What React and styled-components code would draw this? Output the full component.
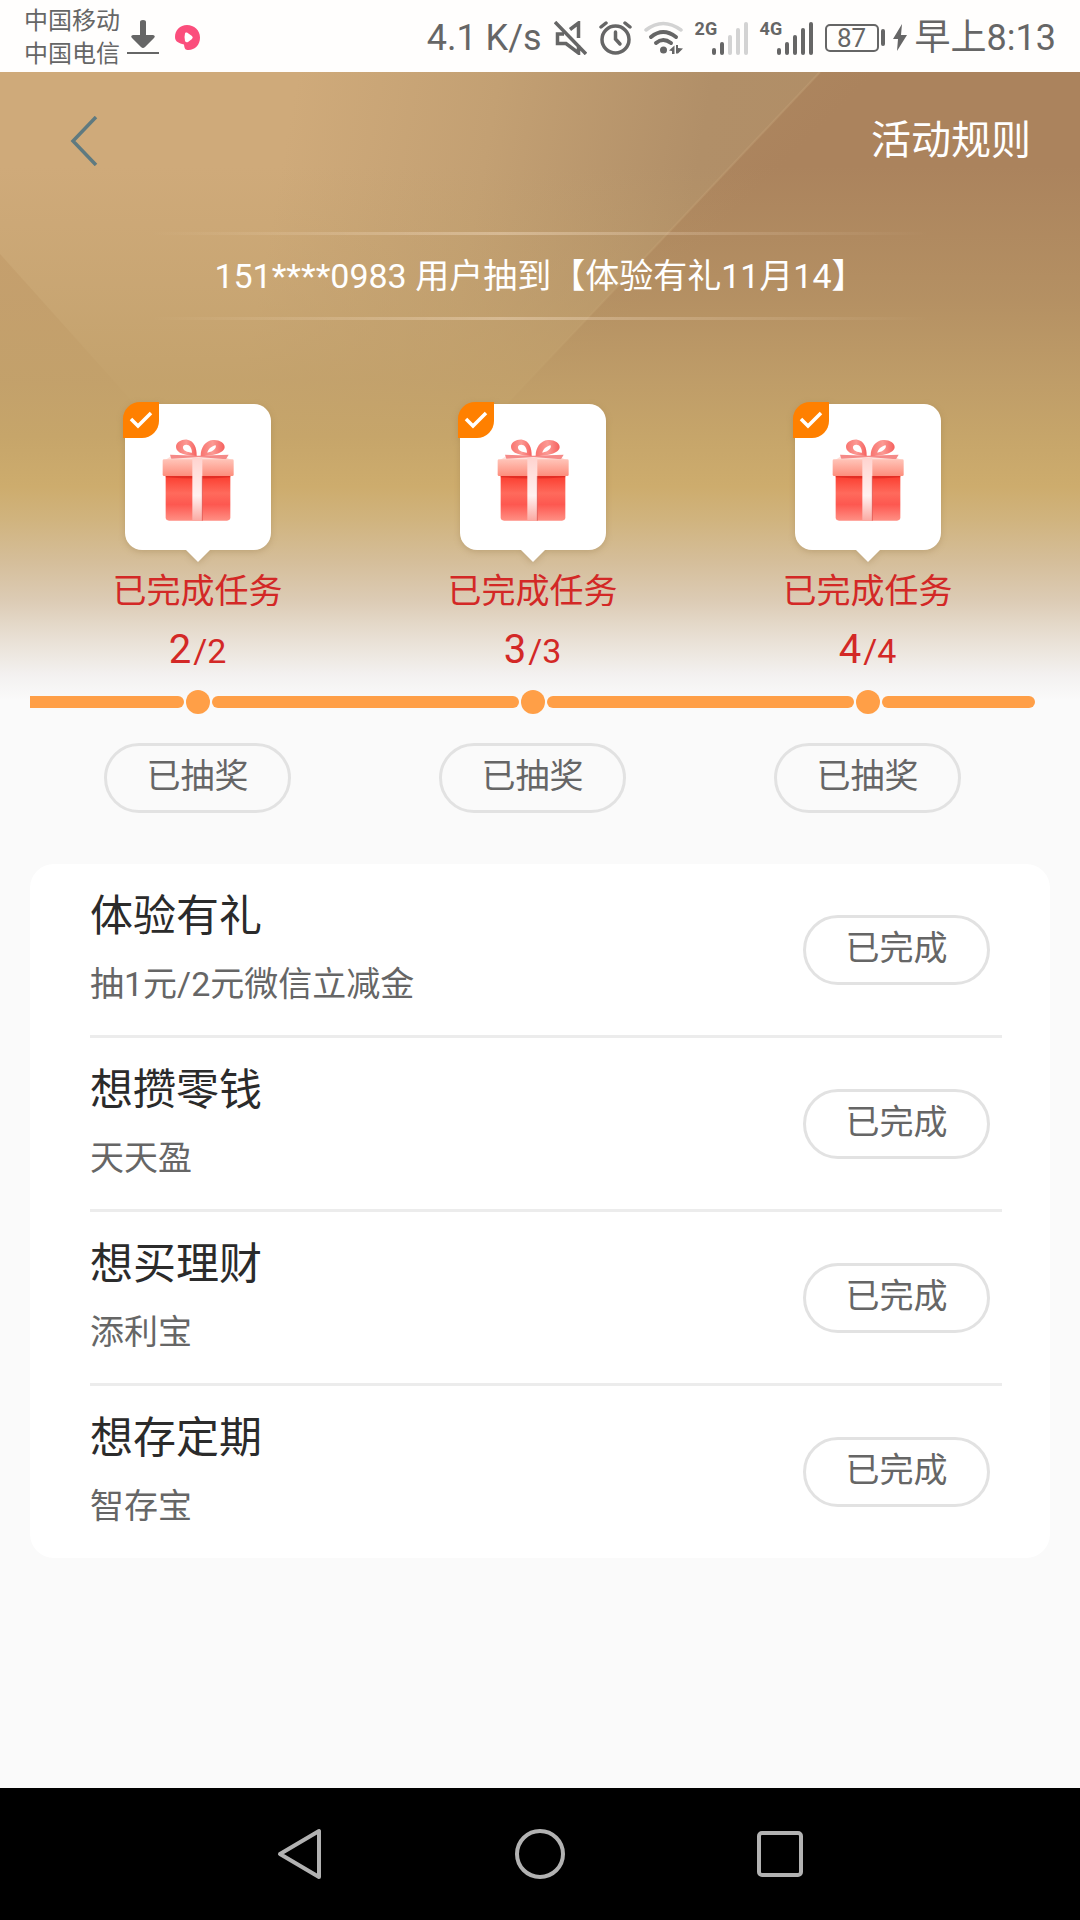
import React from "react";
import styled, { createGlobalStyle } from "styled-components";

const GlobalStyle = createGlobalStyle`
  * {
    box-sizing: border-box;
  }

  body {
    margin: 0;
    background: #fafafa;
    font-family: Roboto, "Noto Sans CJK SC", sans-serif;
  }

  h2, p, ul {
    margin: 0;
    padding: 0;
    font-weight: 400;
  }

  button {
    font-family: inherit;
    cursor: pointer;
  }

  svg {
    display: block;
    flex: none;
  }
`;

const Page = styled.div`
  display: flex;
  flex-direction: column;
  min-height: 100vh;
`;

const StatusBar = styled.div`
  display: flex;
  align-items: center;
  height: 72px;
  padding: 3px 24px 0;
  background: #fffefd;
  color: #666;
`;

const Carriers = styled.div`
  font-size: 24px;
  line-height: 33px;
  margin-right: 7px;
`;

const StatusIcons = styled.div`
  display: flex;
  align-items: center;
  gap: 12px;
  margin-left: auto;
`;

const StatusText = styled.span`
  font-size: 36px;
  line-height: 40px;
  white-space: nowrap;
`;

const PowerGroup = styled.div`
  display: flex;
  align-items: center;
  gap: 8px;
`;

const SignalGroup = styled.div`
  display: flex;
  align-items: flex-start;
`;

const NetworkType = styled.span`
  font-size: 18px;
  font-weight: 700;
  line-height: 16px;
  width: 17px;
`;

const Battery = styled.span`
  display: flex;
  align-items: center;
  gap: 2px;
  font-size: 26px;
  line-height: 24px;

  span {
    width: 54px;
    border: 2px solid #666;
    border-radius: 5px;
    text-align: center;
  }

  &::after {
    content: "";
    width: 4px;
    height: 17px;
    border-radius: 2px;
    background: #666;
  }
`;

const Main = styled.main`
  position: relative;
  flex: 1;
  display: flex;
  flex-direction: column;
  padding-bottom: 48px;
`;

const Backdrop = styled.div`
  position: absolute;
  top: 0;
  left: 0;
  right: 0;
  height: 628px;
  z-index: -1;
  overflow: hidden;
  background: linear-gradient(
    100deg,
    #cfaa7a 0%,
    #cfaa7a 25%,
    #c3a073 42%,
    #b18f68 60%,
    #b08b63 100%
  );

  &::after {
    content: "";
    position: absolute;
    inset: 0;
    background: linear-gradient(
      180deg,
      rgba(192, 160, 106, 0) 15%,
      rgba(192, 160, 106, 0.45) 36%,
      rgba(194, 161, 106, 0.85) 49%,
      #c6a56a 58%,
      #cdac6d 66%,
      #d0b37d 71%,
      #d5be9a 78%,
      #dccbb4 84%,
      #e8dfd3 90%,
      #f3f1f0 96%,
      #fafafa 100%
    );
  }
`;

const Facets = styled.svg`
  position: absolute;
  top: 0;
  left: 0;
  width: 100%;
  height: 100%;
`;

const TopBar = styled.div`
  display: flex;
  align-items: center;
  justify-content: space-between;
  height: 132px;
  padding: 5px 49px 0 60px;
`;

const BackButton = styled.button`
  padding: 10px;
  border: none;
  background: transparent;
`;

const RulesLink = styled.a`
  color: #fff;
  font-size: 40px;
  line-height: 48px;
  text-decoration: none;
`;

const Notice = styled.p`
  margin: 28px 150px 0;
  padding: 19px 0;
  border-style: solid;
  border-width: 3px 0;
  border-image: linear-gradient(
      90deg,
      rgba(255, 235, 215, 0),
      rgba(255, 235, 215, 0.35) 45%,
      rgba(255, 235, 215, 0)
    )
    1;
  color: #fff;
  font-size: 34px;
  line-height: 44px;
  text-align: center;
  white-space: nowrap;
`;

const Milestones = styled.div`
  display: grid;
  grid-template-columns: repeat(3, 1fr);
  margin: 84px 45px 0 30px;
`;

const Milestone = styled.div`
  display: flex;
  flex-direction: column;
  align-items: center;
  color: #d32826;
`;

const GiftCard = styled.div`
  position: relative;
  display: flex;
  justify-content: center;
  width: 146px;
  height: 146px;
  padding-top: 35px;
  border-radius: 17px;
  background: #fff;
  filter: drop-shadow(0 2px 3px rgba(140, 110, 60, 0.3));

  &::after {
    content: "";
    position: absolute;
    top: 100%;
    left: 50%;
    margin-left: -12px;
    border: 12px solid transparent;
    border-top-color: #fff;
    border-bottom: none;
  }
`;

const DoneBadge = styled.span`
  position: absolute;
  top: -2px;
  left: -2px;
  display: flex;
  align-items: center;
  justify-content: center;
  width: 36px;
  height: 36px;
  border-radius: 17px 0 17px 0;
  background: #ff8000;
`;

const MilestoneLabel = styled.p`
  margin-top: 17px;
  font-size: 34px;
  line-height: 48px;
`;

const Count = styled.p`
  margin-top: 11px;
  font-size: 34px;
  line-height: 48px;

  strong {
    font-size: 40px;
    font-weight: 400;
    margin-right: 2px;
  }
`;

const Track = styled.div`
  display: flex;
  align-items: center;
  gap: 2px;
  margin: 15px 45px 29px 30px;
`;

const Segment = styled.span`
  flex: ${({ $span }) => $span} 1 0;
  height: 12px;
  border-radius: ${({ $first }) => ($first ? "0 6px 6px 0" : "6px")};
  background: #ff9f47;
`;

const Dot = styled.span`
  width: 24px;
  height: 24px;
  border-radius: 50%;
  background: #ff9f47;
`;

const DrawRow = styled.div`
  display: grid;
  grid-template-columns: repeat(3, 1fr);
  justify-items: center;
  margin: 0 45px 0 30px;
`;

const Pill = styled.button`
  width: 187px;
  height: 70px;
  padding: 0 0 4px;
  border: 3px solid #e2e2e2;
  border-radius: 35px;
  background: transparent;
  color: #666;
  font-size: 34px;
  line-height: 48px;
`;

const TaskList = styled.ul`
  margin: 51px 30px 0;
  padding: 0 48px 0 60px;
  border-radius: 24px;
  background: #fff;
  list-style: none;
`;

const Task = styled.li`
  display: flex;
  align-items: center;
  justify-content: space-between;
  height: 174px;
  padding-right: 12px;
  border-bottom: 3px solid #ececec;

  &:last-child {
    height: 172px;
    border-bottom: none;
  }
`;

const TaskText = styled.div`
  padding-bottom: 6px;
`;

const TaskTitle = styled.h2`
  color: #2b2b2b;
  font-size: 43px;
  line-height: 60px;
`;

const TaskDesc = styled.p`
  margin-top: 14px;
  color: #666;
  font-size: 34px;
  line-height: 48px;
`;

const NavBar = styled.nav`
  display: flex;
  align-items: center;
  justify-content: center;
  height: 132px;
  background: #000;
`;

const NavButton = styled.button`
  display: flex;
  justify-content: center;
  width: 240px;
  border: none;
  background: transparent;
`;

const milestones = [2, 3, 4];

const tasks = [
  { title: "体验有礼", desc: "抽1元/2元微信立减金" },
  { title: "想攒零钱", desc: "天天盈" },
  { title: "想买理财", desc: "添利宝" },
  { title: "想存定期", desc: "智存宝" },
];

const DownloadIcon = () => (
  <svg width="32" height="36" viewBox="0 0 32 36" fill="#666">
    <path d="M13 2Q13 0 16 0t3 2v13h7q3 1 1 3l-9 9q-2 2-4 0l-9-9q-2-2 1-3h7z" />
    <rect y="32" width="32" height="2" />
  </svg>
);

const PlayIcon = styled(({ className }) => (
  <svg className={className} width="25" height="26" viewBox="0 0 25 26">
    <path
      d="M12 0C19 0 25 5 25 12.500S20 25 13.500 25c-3 0-4-1-4.500-5.500C4 18 0 17 0 12 0 5 5 0 12 0z"
      fill="#fb4e7c"
    />
    <path
      d="M10 8.500q0-1.500 2-1l5 3.500q1.500 1.500 0 3l-4 3q-2 1-3-1-1-4 0-7.500z"
      fill="#fff"
    />
  </svg>
))`
  margin-left: 16px;
`;

const MuteIcon = () => (
  <svg
    width="33"
    height="34"
    viewBox="0 0 33 34"
    fill="none"
    stroke="#666"
    strokeWidth="3.500"
  >
    <path d="M1 1l31 32M16 8.500l8.500-6.500V17M24.500 24v8L12 22.500H3.500V13H10" />
  </svg>
);

const AlarmIcon = () => (
  <svg
    width="33"
    height="34"
    viewBox="0 0 33 34"
    fill="none"
    stroke="#666"
    strokeWidth="3.500"
    strokeLinecap="round"
  >
    <circle cx="16.500" cy="18.500" r="13.500" />
    <path d="M2 6l5-4M31 6l-5-4" />
    <path d="M16.500 11v7l4.500 5" />
  </svg>
);

const WifiIcon = () => (
  <svg
    width="39"
    height="34"
    viewBox="0 0 39 34"
    fill="none"
    stroke="#666"
    strokeWidth="3.500"
    strokeLinecap="round"
  >
    <path d="M2 9Q19-4 37 9" stroke="#d3d3d3" />
    <path d="M7 16q12-10 25 0M12 22q7-6 15 0" strokeWidth="4" />
    <circle cx="19.500" cy="29" r="3.500" fill="#666" stroke="none" />
    <path
      d="M25 29.500l5.500-5V33H28v-3zM39 27.500l-5 5h-2V24h2v3z"
      fill="#666"
      stroke="none"
    />
  </svg>
);

const SignalBars = ({ level }) => (
  <svg width="36" height="34" viewBox="0 0 36 34">
    {[7, 13, 20, 27, 33].map((height, i) => (
      <rect
        key={height}
        x={i * 8}
        y={34 - height}
        width="4"
        height={height}
        rx="2"
        fill={i < level ? "#666" : "#d3d3d3"}
      />
    ))}
  </svg>
);

const BoltIcon = () => (
  <svg width="14" height="27" viewBox="0 0 14 27" fill="#666">
    <path d="M9 0L0 15h5L4 27l10-16H8z" />
  </svg>
);

const GiftIcon = ({ id }) => (
  <svg width="72" height="82" viewBox="154 147 216 246">
    <defs>
      <linearGradient id={`box${id}`} x2="0" y2="1">
        <stop offset="0" stopColor="#fb3a2c" />
        <stop offset="0.400" stopColor="#ff6a5c" />
        <stop offset="0.650" stopColor="#fd5850" />
        <stop offset="1" stopColor="#ff8f84" />
      </linearGradient>
      <linearGradient id={`lid${id}`} x2="0" y2="1">
        <stop offset="0" stopColor="#ffc4b8" />
        <stop offset="1" stopColor="#fd8d7c" />
      </linearGradient>
      <linearGradient id={`ribbon${id}`} x2="0" y2="1">
        <stop offset="0" stopColor="#ffd3cf" />
        <stop offset="0.600" stopColor="#fff2f0" />
        <stop offset="1" stopColor="#fba9a2" />
      </linearGradient>
      <linearGradient id={`bow${id}`}>
        <stop offset="0" stopColor="#f8746f" />
        <stop offset="0.500" stopColor="#fc9a94" />
        <stop offset="1" stopColor="#f5605e" />
      </linearGradient>
    </defs>
    <path d="M165 254h194v128q0 10-10 10H175q-10 0-10-10z" fill={`url(#box${id})`} />
    <path d="M165 257h194v5q-97 7-194 0z" fill="#c91c18" opacity="0.500" />
    <path d="M160 212l22-14h156l28 14z" fill="#ffe0da" />
    <path d="M178 194l84 3 92-3-8 14-82-7-82 5z" fill="#f58a88" />
    <rect x="156" y="208" width="213" height="50" rx="4" fill={`url(#lid${id})`} />
    <rect x="245" y="204" width="30" height="188" fill={`url(#ribbon${id})`} />
    <path d="M275 258v134" stroke="#d9443f" strokeWidth="2" />
    <path
      fillRule="evenodd"
      d="M258 198c-30 0-62-8-62-27 0-15 18-24 34-22 20 3 29 24 28 49zM244 188c0-14-7-24-17-24-8 0-11 5-10 10 1 7 12 13 27 14z"
      fill={`url(#bow${id})`}
    />
    <path
      fillRule="evenodd"
      d="M270 198c30 0 72-7 72-27 0-14-18-23-36-21-22 3-36 22-36 48zM290 188c3-11 13-20 25-22 3 8-6 19-25 22z"
      fill={`url(#bow${id})`}
    />
  </svg>
);

const App = () => {
  return (
    <Page>
      <GlobalStyle />
      <StatusBar>
        <Carriers>
          <div>中国移动</div>
          <div>中国电信</div>
        </Carriers>
        <DownloadIcon />
        <PlayIcon />
        <StatusIcons>
          <StatusText>4.1 K/s</StatusText>
          <MuteIcon />
          <AlarmIcon />
          <WifiIcon />
          <SignalGroup>
            <NetworkType>2G</NetworkType>
            <SignalBars level={2} />
          </SignalGroup>
          <SignalGroup>
            <NetworkType>4G</NetworkType>
            <SignalBars level={5} />
          </SignalGroup>
          <PowerGroup>
            <Battery>
              <span>87</span>
            </Battery>
            <BoltIcon />
            <StatusText>早上8:13</StatusText>
          </PowerGroup>
        </StatusIcons>
      </StatusBar>

      <Main>
        <Backdrop>
          <Facets viewBox="0 0 1080 628" preserveAspectRatio="none">
            <defs>
              <linearGradient id="rightFacet" x1="0.300" y1="0.200" x2="0.700" y2="0.500">
                <stop offset="0" stopColor="#b08a61" />
                <stop offset="0.500" stopColor="#ab835d" />
                <stop offset="1" stopColor="#ab835d" />
              </linearGradient>
            </defs>
            <path d="M820 0H1080V628H227z" fill="url(#rightFacet)" />
            <path d="M820 0L227 628" stroke="#c8a67c" strokeWidth="2" opacity="0.350" />
            <path d="M0 182L400 628H0z" fill="#b68d5b" opacity="0.350" />
          </Facets>
        </Backdrop>
        <TopBar>
          <BackButton aria-label="返回">
            <svg
              width="28"
              height="50"
              viewBox="0 0 28 50"
              fill="none"
              stroke="#5f7a80"
              strokeWidth="3.500"
            >
              <path d="M26 1L3 25l23 24" />
            </svg>
          </BackButton>
          <RulesLink href="#rules">活动规则</RulesLink>
        </TopBar>

        <Notice>151****0983 用户抽到【体验有礼11月14】</Notice>

        <Milestones>
          {milestones.map((count) => (
            <Milestone key={count}>
              <GiftCard>
                <DoneBadge>
                  <svg
                    width="24"
                    height="18"
                    viewBox="0 0 24 18"
                    fill="none"
                    stroke="#fff"
                    strokeWidth="3.500"
                  >
                    <path d="M2 8l7 7L22 2" />
                  </svg>
                </DoneBadge>
                <GiftIcon id={count} />
              </GiftCard>
              <MilestoneLabel>已完成任务</MilestoneLabel>
              <Count>
                <strong>{count}</strong>/{count}
              </Count>
            </Milestone>
          ))}
        </Milestones>

        <Track>
          <Segment $span={1} $first />
          <Dot />
          <Segment $span={2} />
          <Dot />
          <Segment $span={2} />
          <Dot />
          <Segment $span={1} />
        </Track>

        <DrawRow>
          {milestones.map((count) => (
            <Pill key={count}>已抽奖</Pill>
          ))}
        </DrawRow>

        <TaskList>
          {tasks.map(({ title, desc }) => (
            <Task key={title}>
              <TaskText>
                <TaskTitle>{title}</TaskTitle>
                <TaskDesc>{desc}</TaskDesc>
              </TaskText>
              <Pill>已完成</Pill>
            </Task>
          ))}
        </TaskList>
      </Main>

      <NavBar>
        <NavButton aria-label="后退">
          <svg
            width="46"
            height="52"
            viewBox="0 0 46 52"
            fill="none"
            stroke="#b2b2b2"
            strokeWidth="4"
            strokeLinejoin="round"
          >
            <path d="M42 3v46L3 26z" />
          </svg>
        </NavButton>
        <NavButton aria-label="主页">
          <svg width="50" height="50" viewBox="0 0 50 50" fill="none">
            <circle cx="25" cy="25" r="23" stroke="#b2b2b2" strokeWidth="4" />
          </svg>
        </NavButton>
        <NavButton aria-label="最近任务">
          <svg width="46" height="46" viewBox="0 0 46 46" fill="none">
            <rect
              x="2"
              y="2"
              width="42"
              height="42"
              rx="3"
              stroke="#b2b2b2"
              strokeWidth="4"
            />
          </svg>
        </NavButton>
      </NavBar>
    </Page>
  );
};

export default App;
